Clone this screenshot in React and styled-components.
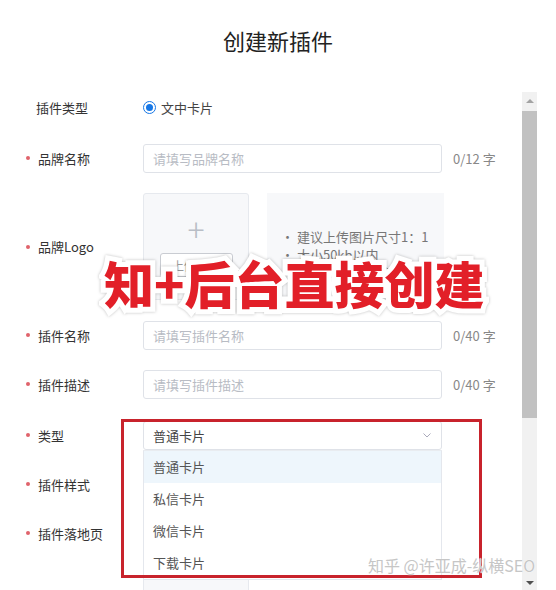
import React from "react";
import styled, { createGlobalStyle } from "styled-components";

const GlobalStyle = createGlobalStyle`
  body {
    margin: 0;
    background: #fff;
    font-family: "Noto Sans CJK SC", "Noto Sans", sans-serif;
  }
`;

const Page = styled.div`
  position: relative;
  width: 556px;
  height: 590px;
  overflow: hidden;
  background: #fff;
`;

const Title = styled.h1`
  margin: 0;
  height: 92px;
  padding-top: 25px;
  box-sizing: border-box;
  text-align: center;
  font-size: 22px;
  line-height: 30px;
  font-weight: 400;
  color: #222;
`;

const Body = styled.div`
  display: flex;
  height: 498px;
`;

const Form = styled.div`
  position: relative;
  width: 522px;
  padding-top: 3px;
  box-sizing: border-box;
`;

const Row = styled.div`
  display: flex;
  align-items: ${(p) => (p.top ? "flex-start" : "center")};
  margin-top: ${(p) => p.gap || 0}px;
  height: ${(p) => p.h || 28}px;
`;

const Label = styled.div`
  width: 143px;
  height: 28px;
  box-sizing: border-box;
  padding-left: ${(p) => (p.required ? 26 : 36)}px;
  display: flex;
  align-items: center;
  font-size: 13px;
  color: #333;
  &::before {
    content: "";
    display: ${(p) => (p.required ? "block" : "none")};
    width: 4px;
    height: 4px;
    border-radius: 50%;
    background: #e0636b;
    margin-right: 8px;
  }
`;

const Radio = styled.span`
  width: 13px;
  height: 13px;
  border-radius: 50%;
  border: 1px solid #1677e6;
  box-sizing: border-box;
  display: flex;
  align-items: center;
  justify-content: center;
  margin-right: 5px;
  &::after {
    content: "";
    width: 7px;
    height: 7px;
    border-radius: 50%;
    background: #1677e6;
  }
`;

const RadioText = styled.span`
  font-size: 13px;
  color: #444;
`;

const Input = styled.div`
  width: 299px;
  height: 29px;
  box-sizing: border-box;
  border: 1px solid #dfe2e8;
  border-radius: 3px;
  padding: 0 9px;
  display: flex;
  align-items: center;
  justify-content: space-between;
  font-size: 13px;
  color: ${(p) => (p.filled ? "#444" : "#b8bcc4")};
`;

const Counter = styled.span`
  margin-left: 11px;
  font-size: 13px;
  color: #888;
`;

const UploadBox = styled.div`
  flex-shrink: 0;
  width: 106px;
  height: ${(p) => p.h || 107}px;
  box-sizing: border-box;
  border: 1px solid #e6e9ee;
  border-radius: 3px;
  background: #f7f8fa;
  display: flex;
  flex-direction: column;
  align-items: center;
  align-self: flex-start;
`;

const Plus = styled.div`
  margin-top: 19px;
  font-size: 32px;
  line-height: 30px;
  font-weight: 300;
  color: #b9bec6;
`;

const UploadButton = styled.div`
  margin-top: 10px;
  width: 73px;
  height: 24px;
  box-sizing: border-box;
  border: 1px solid #c9ccd2;
  border-radius: 3px;
  background: #fff;
  font-size: 12px;
  color: #999;
  display: flex;
  align-items: center;
  justify-content: center;
`;

const Hint = styled.div`
  margin-left: 18px;
  align-self: flex-start;
  width: 177px;
  height: 107px;
  box-sizing: border-box;
  background: #f7f8fa;
  padding: 35px 0 0 14px;
  font-size: 13px;
  line-height: 18px;
  color: #777;
`;

const Select = styled(Input)`
  position: relative;
`;

const Chevron = styled.svg`
  width: 10px;
  height: 10px;
`;

const SelectWrap = styled.div`
  position: relative;
  display: flex;
  align-items: center;
`;

const Menu = styled.div`
  position: absolute;
  left: 0;
  top: 29px;
  width: 299px;
  border: 1px solid #e4e7ed;
  border-top-color: #e9ecf0;
  box-sizing: border-box;
  background: #fff;
  z-index: 2;
`;

const MenuItem = styled.div`
  height: 32px;
  padding-left: 9px;
  display: flex;
  align-items: center;
  font-size: 13px;
  color: #555;
  background: ${(p) => (p.active ? "#eef6fc" : "#fff")};
`;

const Highlight = styled.div`
  position: absolute;
  left: 121px;
  top: 327px;
  width: 361px;
  height: 159px;
  box-sizing: border-box;
  border: 3px solid #c8232c;
  z-index: 3;
`;

const Scrollbar = styled.div`
  width: 15px;
  background: #f1f1f1;
  display: flex;
  flex-direction: column;
  align-items: center;
`;

const Arrow = styled.div`
  width: 0;
  height: 0;
  border-left: 4px solid transparent;
  border-right: 4px solid transparent;
  ${(p) =>
    p.down
      ? "border-top: 4px solid #505050; margin-top: auto; margin-bottom: 5px;"
      : "border-bottom: 4px solid #a3a3a3; margin-top: 7px;"}
`;

const Thumb = styled.div`
  margin-top: 8px;
  width: 15px;
  height: 307px;
  background: #c1c1c1;
`;

const Sticker = styled.div`
  position: absolute;
  left: 104px;
  top: 158px;
  font-size: 50px;
  line-height: 64px;
  font-weight: 900;
  color: #e21f28;
  -webkit-text-stroke: 10px #fff;
  paint-order: stroke fill;
  filter: drop-shadow(0 0 1.5px rgba(0, 0, 0, 0.25));
  white-space: nowrap;
  z-index: 4;
`;

const Watermark = styled.div`
  position: absolute;
  left: 368px;
  top: 554px;
  font-size: 16px;
  line-height: 22px;
  color: #c6c6c6;
  text-shadow: 0 0 1px #fff, 0 0 1px #fff;
  white-space: nowrap;
  z-index: 5;
`;

const menuItems = ["普通卡片", "私信卡片", "微信卡片", "下载卡片"];

export default function App() {
  return (
    <Page>
      <GlobalStyle />
      <Title>创建新插件</Title>
      <Body>
        <Form>
          <Row h={24}>
            <Label>插件类型</Label>
            <Radio />
            <RadioText>文中卡片</RadioText>
          </Row>
          <Row gap={25}>
            <Label required>品牌名称</Label>
            <Input>请填写品牌名称</Input>
            <Counter>0/12 字</Counter>
          </Row>
          <Row gap={21} h={107}>
            <Label required>品牌Logo</Label>
            <UploadBox>
              <Plus>+</Plus>
              <UploadButton>上传图片</UploadButton>
            </UploadBox>
            <Hint>
              • 建议上传图片尺寸1：1
              <br />• 大小50kb以内
              <br />• 支持jpg、png格式
            </Hint>
          </Row>
          <Row gap={21}>
            <Label required>插件名称</Label>
            <Input>请填写插件名称</Input>
            <Counter>0/40 字</Counter>
          </Row>
          <Row gap={21}>
            <Label required>插件描述</Label>
            <Input>请填写插件描述</Input>
            <Counter>0/40 字</Counter>
          </Row>
          <Row gap={23}>
            <Label required>类型</Label>
            <SelectWrap>
              <Select filled>
                普通卡片
                <Chevron viewBox="0 0 10 10">
                  <path d="M1.5 3.5 L5 7 L8.5 3.5" fill="none" stroke="#aab" strokeWidth="1" />
                </Chevron>
              </Select>
              <Menu>
                {menuItems.map((m, i) => (
                  <MenuItem key={m} active={i === 0}>
                    {m}
                  </MenuItem>
                ))}
              </Menu>
            </SelectWrap>
          </Row>
          <Row gap={21}>
            <Label required>插件样式</Label>
            <Input />
          </Row>
          <Row gap={21} top>
            <Label required>插件落地页</Label>
            <UploadBox h={80} />
          </Row>
          <Highlight />
          <Sticker>知+后台直接创建</Sticker>
        </Form>
        <Scrollbar>
          <Arrow />
          <Thumb />
          <Arrow down />
        </Scrollbar>
      </Body>
      <Watermark>知乎 @许亚成-纵横SEO</Watermark>
    </Page>
  );
}
